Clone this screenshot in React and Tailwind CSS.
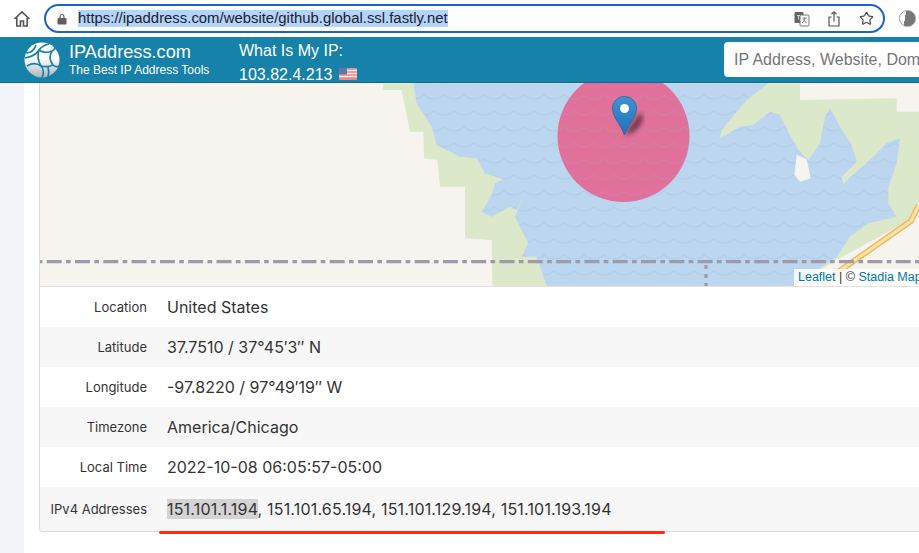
import React from "react";
import { Star } from "lucide-react";

// traced from the screenshot, in page pixels (viewBox of the map matches the page)
const pts = (list, ox, oy) => list.map(([x, y]) => `${ox + x / 3},${oy + y / 3}`).join(" ");

const waterLeft = [[1240, 10], [1250, 70], [1295, 140], [1310, 195], [1380, 230]];
const waterRest = [
    [50, 235], [75, 280], [130, 298], [105, 310], [95, 345], [65, 395], [95, 410], [150, 380], [170, 390], [190, 350],
    [165, 410], [205, 490], [185, 530], [230, 530], [260, 618], [1000, 618], [1130, 530], [1170, 470], [1225, 430],
    [1310, 410], [1285, 370], [1285, 320], [1310, 250], [1320, 175], [1280, 190], [1230, 240], [1195, 270], [1150, 312],
    [1145, 290], [1190, 245], [1175, 195], [1140, 140], [1110, 85], [1095, 110], [1080, 190], [1045, 240], [1015, 210],
    [990, 165], [960, 105], [930, 95], [880, 135], [840, 140], [780, 175], [785, 150], [860, 60], [925, 10],
];
const greenLeftA = [[1150, 10], [1150, 30], [1205, 30], [1230, 155], [1270, 155], [1272, 235], [1312, 240], [1320, 320], [1380, 320], [1380, 10]];
const greenLeftB = [[0, 230], [0, 320], [15, 320], [15, 475], [95, 480], [97, 618], [300, 618], [300, 230]];
const greenRight = [[925, 10], [1020, 10], [1020, 60], [1310, 55], [1310, 95], [1380, 95], [1380, 360], [1350, 420], [1130, 540], [1000, 618], [760, 618], [760, 100]];
const landPatch = [[1010, 225], [1040, 238], [1052, 295], [1020, 305], [1003, 285]];
const water = `${pts(waterLeft, 0, 80)} ${pts(waterRest, 460, 80)}`;

function MapLayer() {
    return (
        <svg viewBox="40 83 880 203" className="block w-[880px] h-[203px]">
            <defs>
                <pattern id="waves" width="20" height="32" patternUnits="userSpaceOnUse" patternTransform="translate(4 92)">
                    <path d="M0 3Q10 11 20 3" fill="none" stroke="#a6c2e0" strokeWidth="1.1" />
                    <path d="M-10 19Q0 27 10 19Q20 27 30 19" fill="none" stroke="#a6c2e0" strokeWidth="1.1" />
                </pattern>
                <filter id="soft"><feGaussianBlur stdDeviation="0.5" /></filter>
                <filter id="softer"><feGaussianBlur stdDeviation="0.35" /></filter>
                <filter id="shadow"><feGaussianBlur stdDeviation="2.500" /></filter>
                <linearGradient id="pin" x1="0" y1="0" x2="0" y2="1">
                    <stop offset="0" stopColor="#3f93d2" />
                    <stop offset="1" stopColor="#1f72bb" />
                </linearGradient>
            </defs>
            <rect x="40" y="83" width="880" height="203" fill="#f7f4ef" />
            <g filter="url(#soft)">
                <polygon points={pts(greenLeftA, 0, 80)} fill="#dbe8c9" />
                <polygon points={pts(greenLeftB, 460, 80)} fill="#dbe8c9" />
                <polygon points={pts(greenRight, 460, 80)} fill="#dbe8c9" />
                <polygon points={water} fill="#bcd6f0" />
                <path d="M919 205L911 221L838 272L825 286" fill="none" stroke="#e9b96e" strokeWidth="6" />
                <path d="M919 205L911 221L838 272L825 286" fill="none" stroke="#fbe39c" strokeWidth="3" />
            </g>
            <polygon points={water} fill="url(#waves)" opacity="0.45" />
            <polygon points={pts(landPatch, 460, 80)} fill="#f7f4ef" filter="url(#soft)" />
            <g filter="url(#softer)" stroke="#9d9ba9" strokeWidth="3.200" fill="none">
                <path d="M40 261.700H919" strokeDasharray="15 4.300 4.700 4.300" strokeDashoffset="21.600" />
                <path d="M706 265V286" strokeDasharray="4 5" />
            </g>
            <circle cx="623.5" cy="136" r="66" fill="#e0719a" />
            <circle cx="623.5" cy="136" r="66" fill="url(#waves)" opacity="0.12" />
            <path d="M624 135L640 113C646 116 642 126 632 133Z" fill="#5c2a40" opacity="0.85" filter="url(#shadow)" />
            <path
                d="M624.5 135C621 125 612.5 117 612.5 108.500C612.500 101.500 618 96.500 624.500 96.500C631 96.500 636.500 101.500 636.500 108.500C636.500 117 628 125 624.500 135Z"
                fill="url(#pin)"
                stroke="#24659c"
                strokeWidth="0.8"
            />
            <circle cx="624.500" cy="108.500" r="4.500" fill="#fff" />
        </svg>
    );
}

function Logo() {
    return (
        <svg viewBox="0 0 36 36" className="w-9 h-9 shrink-0">
            <defs>
                <linearGradient id="globe" x1="0" y1="0" x2="0" y2="1">
                    <stop offset="0.45" stopColor="#ffffff" />
                    <stop offset="1" stopColor="#a9b4ba" />
                </linearGradient>
            </defs>
            <circle cx="18" cy="18" r="17.500" fill="url(#globe)" />
            <g fill="none" stroke="#1681a9" strokeWidth="1.700">
                <path d="M1 16C7 15 12 13 15 8C17 5 21 3 25 2" />
                <path d="M15 8C19 11 23 11 28 9C30 8 31 6 31 5" />
                <path d="M28 9C25 14 25 18 29 23C31 25 33 25 35 24" />
                <path d="M2 11C6 11 10 9 12 3" />
                <path d="M3 24C8 21 13 21 17 24C20 27 20 31 18 36" />
                <path d="M15 8C13 14 14 19 17 24" />
                <path d="M29 23C25 25 21 25 17 24" />
                <path d="M24 25C25 28 25 31 24 35" />
            </g>
        </svg>
    );
}

function Flag() {
    return (
        <svg viewBox="0 0 18 12" className="w-[18px] h-3 ml-[7px] -mt-[2px]">
            <rect width="18" height="12" rx="1" fill="#e58a8e" />
            <path d="M0 2.500H18M0 5.500H18M0 8.500H18" stroke="#f6e6e6" strokeWidth="1.400" />
            <rect width="8" height="6.500" rx="1" fill="#5f78a8" />
        </svg>
    );
}

function TopBar() {
    return (
        <div className="h-[37px] bg-white flex items-center shrink-0">
            <svg viewBox="0 0 18 18" className="w-[18px] h-[18px] ml-[13px] mt-[1px] text-[#555]" fill="none" stroke="currentColor" strokeWidth="1.600">
                <path d="M1.500 9L9 1.800L16.500 9" />
                <path d="M3.800 7.500V16H7.500V11H10.500V16H14.200V7.500" />
            </svg>
            <div className="ml-[13px] w-[841px] h-[29px] border-2 border-[#1a62cf] rounded-full flex items-center">
                <svg viewBox="0 0 10 12" className="w-[10px] h-3 ml-[11px] text-[#5f5f5f]" fill="currentColor">
                    <path d="M2.500 5V3.400a2.500 2.500 0 0 1 5 0V5h1.300a.7.7 0 0 1 .7.7v5.100a.7.7 0 0 1-.7.7H1.200a.7.7 0 0 1-.7-.7V5.700a.7.7 0 0 1 .7-.7zM3.700 5h2.600V3.400a1.300 1.300 0 0 0-2.600 0z" />
                </svg>
                <span className="ml-[11px] bg-[#b3d4fd] text-[#222] text-[14.900px] leading-[17px] font-['Liberation_Sans',sans-serif] whitespace-nowrap">
                    https://ipaddress.com/website/github.global.ssl.fastly.net
                </span>
                <div className="ml-auto flex items-center mr-[9px]">
                    <svg viewBox="0 0 16 16" className="w-4 h-4" >
                        <rect x="0.500" y="1" width="9" height="11" rx="1" fill="#666" />
                        <rect x="6" y="4" width="9" height="11" rx="1" fill="#fff" stroke="#777" />
                        <path d="M3 4.500h3M4.500 4.500v4" fill="none" stroke="#ddd" strokeWidth="0.900" />
                        <path d="M8.500 7h4.500M11 7c-.5 3-1.500 4-3 5M9.500 8c.5 2 2 3.500 3.500 4" fill="none" stroke="#777" strokeWidth="0.900" />
                    </svg>
                    <svg viewBox="0 0 12 16" className="w-3 h-4 ml-[18px] text-[#555]" fill="none" stroke="currentColor" strokeWidth="1.200">
                        <path d="M3.500 6H1V15H11V6H8.500" />
                        <path d="M6 10.500V1M3.500 3.300L6 .9L8.500 3.300" />
                    </svg>
                    <Star className="w-[15px] h-[15px] ml-[19px] text-[#444]" strokeWidth={1.800} />
                </div>
            </div>
            <div className="ml-[14px] w-[17px] h-[17px] rounded-full border border-[#999] bg-[linear-gradient(100deg,#fff_35%,#777_35%)]" />
        </div>
    );
}

function Header() {
    return (
        <div className="h-[46px] bg-[#1681a9] border-b border-[#0f6c8f] flex shrink-0 font-['Liberation_Sans',sans-serif] text-white">
            <div className="ml-[24px] mt-[5px]"><Logo /></div>
            <div className="ml-[9px] w-[170px] mt-[5px]">
                <div className="text-[18.200px] leading-[20px]">IPAddress.com</div>
                <div className="text-[12px] leading-[14px] mt-[1px]">The Best IP Address Tools</div>
            </div>
            <div className="mt-[4px] font-medium">
                <div className="text-[16px] leading-[19px]">What Is My IP:</div>
                <div className="flex items-center text-[16px] leading-[19px] mt-[5px]">103.82.4.213<Flag /></div>
            </div>
            <input
                placeholder="IP Address, Website, Domain..."
                readOnly
                className="ml-auto mt-[5px] w-[300px] -mr-[105px] h-[35px] rounded-[4px] bg-white pl-[10px] text-[16px] outline-none placeholder:text-[#757575]"
            />
        </div>
    );
}

const rows = [
    ["Location", "United States"],
    ["Latitude", "37.7510 / 37°45′3″ N"],
    ["Longitude", "-97.8220 / 97°49′19″ W"],
    ["Timezone", "America/Chicago"],
    ["Local Time", "2022-10-08 06:05:57-05:00"],
];

export default function App() {
    return (
        <div className="h-[553px] w-[919px] overflow-hidden flex flex-col bg-white font-['Inter',sans-serif]">
            <TopBar />
            <Header />
            <div className="flex flex-1 min-h-0">
                <div className="w-6 bg-[#f3f4fa] shrink-0" />
                <div className="relative ml-[15px] w-[900px] shrink-0 self-start">
                    <div className="border-l border-b border-[#d9d9d9] rounded-bl-[4px]">
                        <MapLayer />
                        <div className="border-t border-[#e2e2e2]">
                            {rows.map(([label, value], i) => (
                                <div key={label} className={`h-10 flex items-center ${i % 2 ? "bg-[#f7f7f7]" : "bg-white"}`}>
                                    <div className="w-[107px] pt-[2px] text-right text-[13px] text-[#333]">{label}</div>
                                    <div className="ml-5 text-[16px] text-[#333]">{value}</div>
                                </div>
                            ))}
                            <div className="h-[44px] flex items-center bg-[#f7f7f7] rounded-bl-[4px]">
                                <div className="w-[107px] pt-[2px] text-right text-[13px] text-[#333]">IPv4 Addresses</div>
                                <div className="ml-5 text-[16px] tracking-[0.18px] text-[#333]">
                                    <span className="bg-[#d4d4d4]">151.101.1.194</span>, 151.101.65.194, 151.101.129.194, 151.101.193.194
                                </div>
                            </div>
                        </div>
                    </div>
                    {/* map credit and the red hand-drawn underline sit on top of the card */}
                    <div className="absolute left-[755px] top-[186px] h-[17px] w-[145px] bg-white/80 pl-[4px] text-[12.500px] leading-[17px] text-[#333] font-['Liberation_Sans',sans-serif] whitespace-nowrap">
                        <span className="text-[#0078a8]">Leaflet</span> | © <span className="text-[#0078a8]">Stadia Maps</span>
                    </div>
                    <div className="absolute left-[120px] top-[448px] h-[3px] w-[506px] bg-[#ff2d0a] rounded-full" />
                </div>
            </div>
        </div>
    );
}
